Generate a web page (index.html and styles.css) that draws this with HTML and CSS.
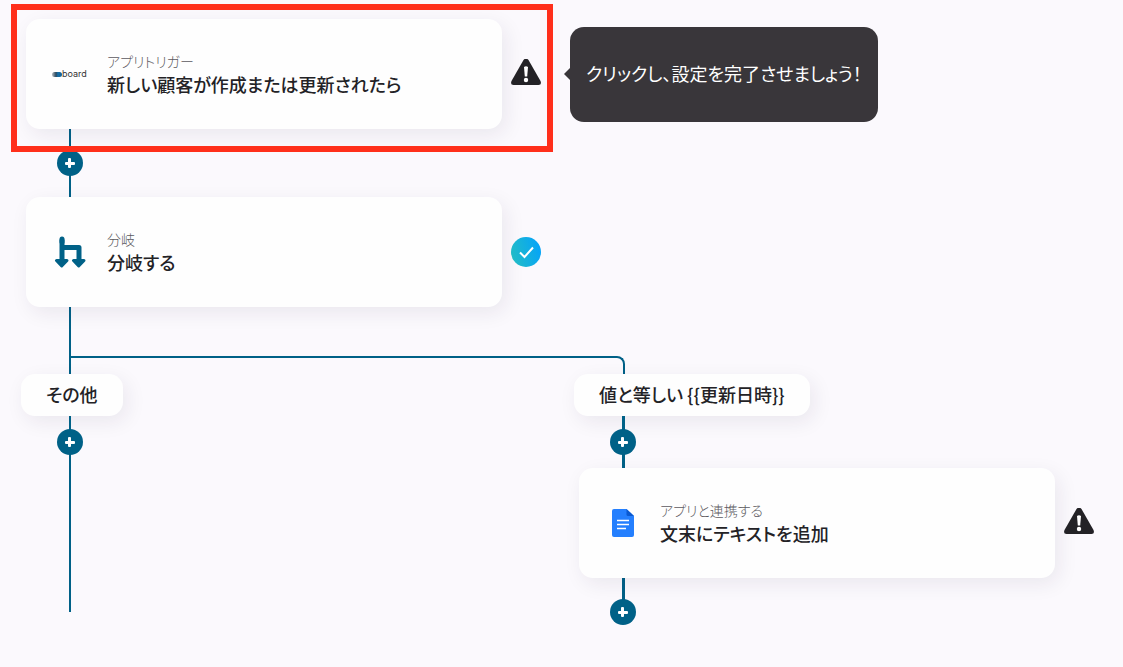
FILE: index.html
```html
<!DOCTYPE html>
<html lang="ja">
	<head>
		<meta charset="UTF-8" />
		<meta name="viewport" content="width=device-width, initial-scale=1.0" />
		<title>フロー編集</title>
		<link rel="stylesheet" href="styles.css">
	</head>
	<body>
		<main class="flow">
			<!-- トリガー -->
			<div class="step selected">
				<section class="card">
					<div class="card-icon">
						<svg width="36" height="12" viewBox="0 0 36 12" aria-hidden="true">
							<defs>
								<linearGradient id="logo-gradient">
									<stop offset="0" stop-color="#b4b9be" />
									<stop offset="0.4" stop-color="#2c4a60" />
									<stop offset="0.6" stop-color="#1670aa" />
									<stop offset="1" stop-color="#155f91" />
								</linearGradient>
							</defs>
							<rect x="0" y="4" width="10" height="5" rx="2.5" fill="url(#logo-gradient)" />
							<text class="logo-text" x="10" y="9">board</text>
						</svg>
					</div>
					<div class="card-text">
						<p class="card-label">アプリトリガー</p>
						<h2 class="card-title">新しい顧客が作成または更新されたら</h2>
					</div>
				</section>
				<svg class="status" viewBox="0 0 30 30" role="img" aria-label="未設定">
					<path d="M12.5 1Q15-2 17.5 1L29.5 22Q31 26 27.5 26H2.5Q-1 26 .5 22Z" fill="#232226" />
					<path d="M13 8Q15 6.5 17 8L16.2 17.5H13.8Z" fill="#fff" />
					<circle cx="15" cy="21" r="2.2" fill="#fff" />
				</svg>
				<div class="tooltip" role="tooltip">クリックし、設定を完了させましょう！</div>
			</div>
			<div class="connector">
				<span class="line"></span>
				<button class="add" type="button" aria-label="ステップを追加"></button>
				<span class="line"></span>
			</div>

			<!-- 分岐 -->
			<div class="step">
				<section class="card">
					<div class="card-icon">
						<svg width="32" height="32" viewBox="0 0 32 32" aria-hidden="true">
							<path d="M8 3.5V25M8 11.5H25V25" fill="none" stroke="#006187" stroke-width="5" stroke-linejoin="round" />
							<path d="M8 3V6" stroke="#006187" stroke-width="5" stroke-linecap="round" />
							<path d="M2.5 24.5H13L7.7 30ZM19.5 24.5H30L24.7 30Z" fill="#006187" stroke="#006187" stroke-width="3" stroke-linejoin="round" />
						</svg>
					</div>
					<div class="card-text">
						<p class="card-label">分岐</p>
						<h2 class="card-title">分岐する</h2>
					</div>
				</section>
				<svg class="status" viewBox="0 0 30 30" role="img" aria-label="設定済み">
					<defs>
						<linearGradient id="done-gradient" x1="0" y1="0.6" x2="1" y2="0.3">
							<stop offset="0" stop-color="#22bcc6" />
							<stop offset="1" stop-color="#04a3fa" />
						</linearGradient>
					</defs>
					<circle cx="15" cy="15" r="15" fill="url(#done-gradient)" />
					<path d="M9 15.5L13.5 20L22 10.5" fill="none" stroke="#fff" stroke-width="2" />
				</svg>
			</div>
			<div class="trunk"></div>
			<div class="fork"></div>

			<div class="branches">
				<div class="branch">
					<div class="branch-name">その他</div>
					<div class="connector">
						<span class="line"></span>
						<button class="add" type="button" aria-label="ステップを追加"></button>
						<span class="line line-tail"></span>
					</div>
				</div>
				<div class="branch branch-active">
					<div class="branch-name">値と等しい {{更新日時}}</div>
					<div class="connector">
						<span class="line"></span>
						<button class="add" type="button" aria-label="ステップを追加"></button>
						<span class="line"></span>
					</div>
					<div class="step">
						<section class="card">
							<div class="card-icon">
								<svg width="22" height="28" viewBox="0 0 22 28" aria-hidden="true">
									<path d="M2 0H14.5L22 7V26Q22 28 20 28H2Q0 28 0 26V2Q0 0 2 0Z" fill="#247ffe" />
									<path d="M14.5 0L22 7H16Q14.5 7 14.5 5.5Z" fill="#0b59cf" />
									<path d="M5 11.5H17M5 15.5H17M5 19.5H14" stroke="#fff" stroke-width="1.6" />
								</svg>
							</div>
							<div class="card-text">
								<p class="card-label">アプリと連携する</p>
								<h2 class="card-title">文末にテキストを追加</h2>
							</div>
						</section>
						<svg class="status" viewBox="0 0 30 30" role="img" aria-label="未設定">
							<path d="M12.5 1Q15-2 17.5 1L29.5 22Q31 26 27.5 26H2.5Q-1 26 .5 22Z" fill="#232226" />
							<path d="M13 8Q15 6.5 17 8L16.2 17.5H13.8Z" fill="#fff" />
							<circle cx="15" cy="21" r="2.2" fill="#fff" />
						</svg>
					</div>
					<div class="connector">
						<span class="line"></span>
						<button class="add" type="button" aria-label="ステップを追加"></button>
					</div>
				</div>
			</div>
		</main>
	</body>
</html>
```
FILE: styles.css
```css
/* 基本スタイル */
*,
*::before,
*::after {
	box-sizing: border-box;
}

body {
	margin: 0;
	font-family: "Noto Sans CJK JP", sans-serif;
	font-feature-settings: "palt";
	color: #232226;
	background-color: #fbf9fd;
}

.flow {
	padding: 19px 0 40px 21px;
}

/* ステップ */
.step {
	display: flex;
	align-items: center;
	gap: 9px;
	margin-left: 5px;
	position: relative;
}

.card {
	display: flex;
	align-items: center;
	gap: 19px;
	flex: 0 1 476px;
	min-height: 110px;
	padding: 0 26px;
	border-radius: 14px;
	background-color: #fefefe;
	box-shadow: 4px 6px 20px rgba(40, 30, 60, 0.08);
}

.card-icon {
	display: flex;
	justify-content: center;
	flex: none;
	width: 36px;
}

.card-text {
	padding-bottom: 2px;
}

.card-label,
.card-title {
	margin: 0;
}

.card-label {
	font-size: 14px;
	font-weight: 300;
	line-height: 22px;
	color: #5c5a60;
}

.card-title {
	font-size: 18px;
	font-weight: 500;
	line-height: 24px;
}

.logo-text {
	font-family: Inter, sans-serif;
	font-size: 9px;
	fill: #333;
}

.status {
	flex: none;
	width: 30px;
	height: 30px;
}

/* 選択中の赤枠 */
.selected::after {
	content: "";
	position: absolute;
	top: -15px;
	left: -15px;
	width: 542px;
	height: 148px;
	border: 6px solid #ff2f1b;
	pointer-events: none;
	z-index: 1;
}

/* ツールチップ */
.tooltip {
	position: relative;
	margin-left: 20px;
	padding: 34px 16px 36px;
	border-radius: 14px;
	font-size: 18px;
	line-height: 25px;
	color: #fff;
	background-color: #39363a;
}

.tooltip::before {
	content: "";
	position: absolute;
	top: 50%;
	right: 100%;
	margin-top: -6px;
	border: solid transparent;
	border-width: 6px 6px 6px 0;
	border-right-color: #39363a;
}

/* 接続線 */
.connector {
	display: flex;
	flex-direction: column;
	align-items: center;
	width: 26px;
	margin-left: 36px;
}

.line {
	width: 2px;
	height: 22px;
	background-color: #006187;
}

.add {
	position: relative;
	width: 26px;
	height: 26px;
	margin: -1px 0;
	padding: 0;
	border: none;
	border-radius: 50%;
	background-color: #006187;
	cursor: pointer;
}

.add::before,
.add::after {
	content: "";
	position: absolute;
	inset: 12px 8px 11px;
	border-radius: 1px;
	background-color: #fff;
}

.add::before {
	inset: 8px 12px 8px 11px;
}

.trunk {
	width: 2px;
	height: 49px;
	margin-left: 48px;
	background-color: #006187;
}

.fork {
	width: 556px;
	height: 18px;
	margin-left: 48px;
	border: 2px solid #006187;
	border-bottom: none;
	border-top-right-radius: 8px;
}

/* 分岐先 */
.branches {
	display: grid;
	grid-template-columns: 553px minmax(0, 1fr);
}

.branch-name {
	width: fit-content;
	padding: 7px 25px 9px;
	border-radius: 14px;
	font-size: 18px;
	font-weight: 500;
	line-height: 26px;
	background-color: #fefefe;
	box-shadow: 4px 6px 20px rgba(40, 30, 60, 0.08);
}

.branch-name + .connector .line {
	height: 14px;
}

.branch-name + .connector .line-tail {
	height: 158px;
}

.branch-active .line {
	width: 3px;
}
```
